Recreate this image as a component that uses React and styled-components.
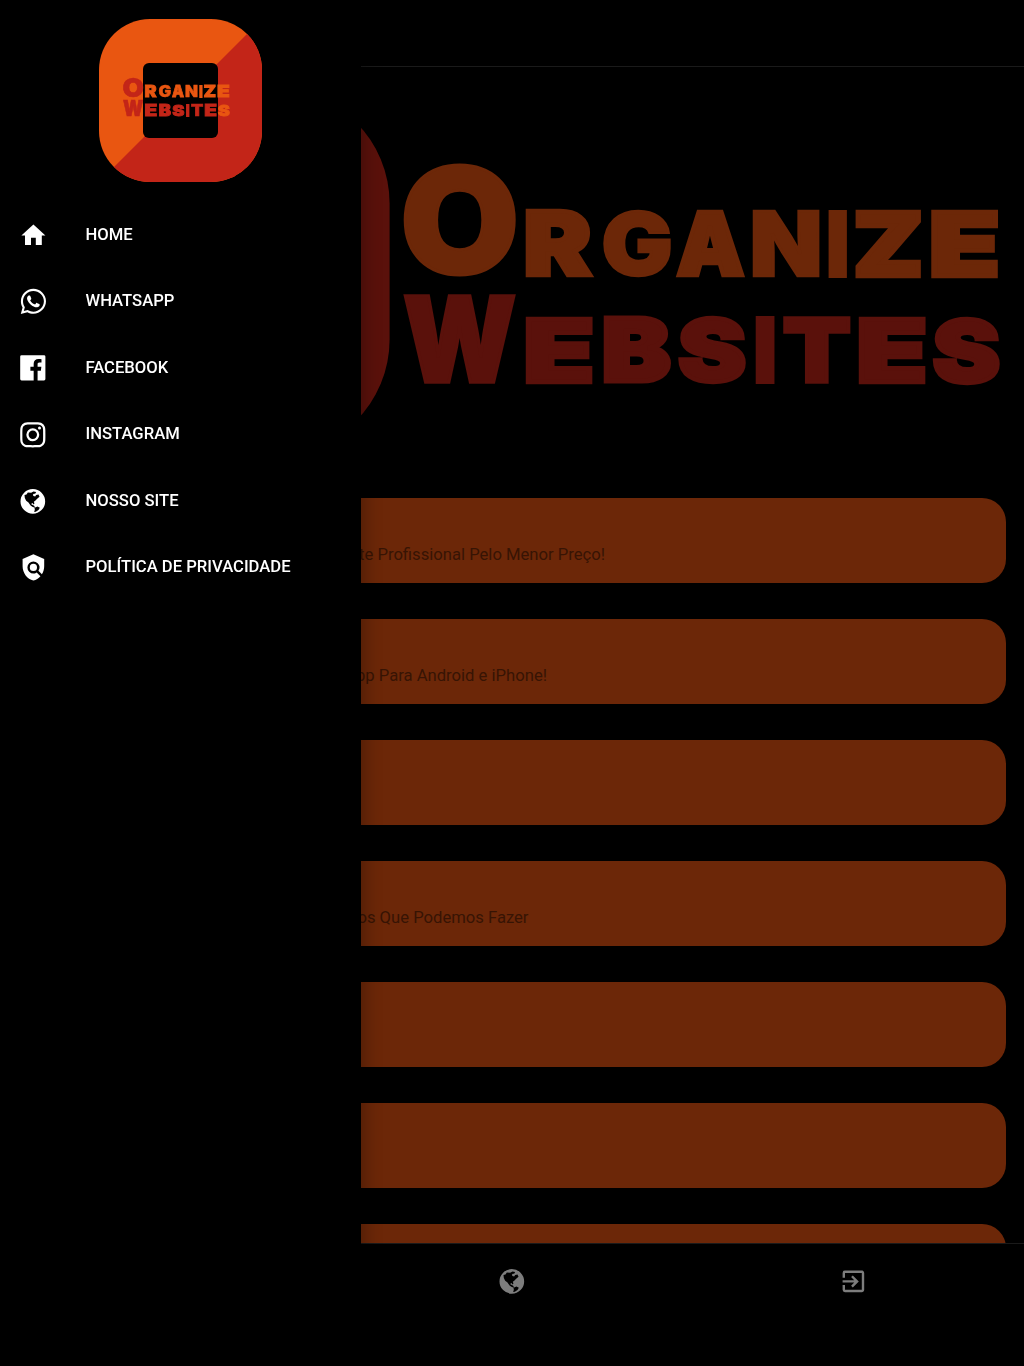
import React from "react";
import styled, { createGlobalStyle } from "styled-components";
import { MdHome, MdPolicy, MdExitToApp } from "react-icons/md";
import { FaWhatsapp } from "react-icons/fa";
import { BiLogoInstagram, BiLogoFacebookSquare } from "react-icons/bi";

const GlobalStyle = createGlobalStyle`
  html, body { margin: 0; background: #000; overflow: hidden; }
  body { font-family: Roboto, "Noto Sans", sans-serif; font-size: 16.64px; }
  * { box-sizing: border-box; }
`;

const Screen = styled.div`
  display: flex;
  flex-direction: column;
  height: 1366px;
  width: 1024px;
  background: #000;
`;

const Header = styled.header`
  flex: none;
  height: 67px;
  border-bottom: 1px solid #1a1a1a;
`;

const Content = styled.main`
  flex: 1;
  min-height: 0;
  overflow: hidden;
`;

const Banner = styled.svg`
  display: block;
  width: 1024px;
  height: 431px;
`;

const CardList = styled.div`
  display: flex;
  flex-direction: column;
  gap: 35.8px;
  padding: 0 18px;
`;

const Card = styled.article`
  flex: none;
  height: 85.2px;
  padding: 47px ${(p) => p.$inset || 0}px 0 0;
  border-radius: 24px;
  background: #6c2708;
  color: #371404;
  line-height: 20px;
  text-align: right;
  white-space: nowrap;
`;

const Footer = styled.footer`
  flex: none;
  display: grid;
  grid-template-columns: repeat(3, 1fr);
  justify-items: center;
  height: 123px;
  padding-top: 23px;
  border-top: 1px solid #1a1a1a;
  color: #7d7d7d;
  font-size: 28.8px;

  svg { display: block; }
`;

const Drawer = styled.aside`
  position: fixed;
  top: 0;
  left: 0;
  width: 361px;
  height: 1366px;
  padding-top: 19px;
  background: #000;
  box-shadow: 4px 0 16px rgba(0, 0, 0, 0.26);
`;

const AppIcon = styled.svg`
  display: block;
  width: 163px;
  height: 163px;
  margin: 0 auto;
`;

const Menu = styled.nav`
  display: flex;
  flex-direction: column;
  padding-top: 19px;
`;

const MenuItem = styled.a`
  display: flex;
  align-items: center;
  gap: 35px;
  height: 66.5px;
  padding-left: 16px;
  color: #fff;
  font-weight: 500;
`;

const MenuIcon = styled.span`
  display: flex;
  justify-content: center;
  width: 34.5px;
  padding-top: 1.6px;
  font-size: ${(p) => p.$size || 28.8}px;

  svg { flex: none; }
`;

/* Ink bounds of each letter at 100px: left, right, top, bottom, stroke. */
const INK = {
  O: [3, 75, 74, -1, 2], R: [4, 65, 73, 0, 5], G: [3, 72, 74, -1, 3], A: [1.5, 78, 73, 0, 5],
  N: [4, 73, 73, 0, 3], I: [4, 25, 73, 0, 0.01], Z: [3.5, 65.5, 73, 0, 5], E: [4, 57.5, 73, 0, 5],
  W: [1.5, 106.5, 73, 0, 3], B: [4, 64.5, 73, 0, 6], S: [2.5, 64, 74, -1, 5], T: [2.5, 66.5, 73, 0, 4],
};

/* Wordmark boxes: letter, x, width, top, height. */
const FIRST = [
  ["O", 403, 114, 163, 113.5], ["R", 525, 67, 209, 68.5], ["G", 603, 68, 209.5, 68],
  ["A", 676, 69, 209.5, 68], ["N", 752, 68, 209.5, 68], ["I", 828, 19.5, 209.5, 68],
  ["Z", 854, 68, 209.5, 68.5], ["E", 930.5, 68, 209.5, 68.5],
];
const SECOND = [
  ["W", 403, 113, 293.5, 90], ["E", 525, 68, 316, 68], ["B", 603, 68, 316, 68],
  ["S", 678, 68, 316, 68], ["I", 755, 20, 316, 68], ["T", 783, 68, 316, 68],
  ["E", 858, 68, 316, 68], ["S", 932.5, 67.5, 316.5, 68],
];

const Letter = styled.text`
  font: 900 100px Inter, "Liberation Sans", sans-serif;
  stroke-width: ${(p) => p.$weight}px;
  stroke-miterlimit: 3;
`;

function Word({ letters, colors }) {
  return letters.map(([char, x, width, top, height], i) => {
    const [left, right, up, down, weight] = INK[char];
    const sx = width / (right - left + weight);
    const sy = height / (up - down + weight);
    const color = colors[i] || colors[0];
    return (
      <g key={i} transform={`translate(${x} ${top}) scale(${sx} ${sy})`}>
        <Letter $weight={weight} x={weight / 2 - left} y={up + weight / 2} fill={color} stroke={color}>
          {char}
        </Letter>
      </g>
    );
  });
}

const ORANGE = "#e95611";
const RED = "#c32518";
const organizeColors = [RED, ORANGE, ORANGE, ORANGE, ORANGE, ORANGE, ORANGE, ORANGE];
const websitesColors = [RED, RED, RED, RED, RED, RED, RED, ORANGE];

function Earth() {
  return (
    <svg width="1em" height="1em" viewBox="-41.5 -43.2 86.4 86.4" fill="currentColor" fillRule="evenodd">
      <path
        d="M0-37A37 37 0 1 1 0 37A37 37 0 1 1 0-37Z
           M-25-19L-19-21L-15-27L-5-26L2-30L10-28L7-23L3-23L0-20L2-16L7-15L10-19L17-21L20-14L13-8L8-3L3 1L5 6L2 9L-1 5L-4 6L-4 9L0 11L4 13L7 19L0 17L-6 13L-10 8L-13 3L-20-2L-24-10Z
           M5 19L14 15L21 19L17 26L9 31L4 32L6 25Z"
      />
    </svg>
  );
}

const menu = [
  { label: "HOME", icon: <MdHome /> },
  { label: "WHATSAPP", icon: <FaWhatsapp /> },
  { label: "FACEBOOK", icon: <BiLogoFacebookSquare />, size: 33.6 },
  { label: "INSTAGRAM", icon: <BiLogoInstagram />, size: 33.6 },
  { label: "NOSSO SITE", icon: <Earth /> },
  { label: "POLÍTICA DE PRIVACIDADE", icon: <MdPolicy /> },
];

const cards = [
  { text: "Site Profissional Pelo Menor Preço!", inset: 401 },
  { text: "App Para Android e iPhone!", inset: 459 },
  {},
  { text: "Serviços Que Podemos Fazer", inset: 477.5 },
  {},
  {},
  {},
];

export default function App() {
  return (
    <>
      <GlobalStyle />
      <Screen>
        <Header />
        <Content>
          <Banner viewBox="0 67 1024 431">
            <rect x="24" y="88.5" width="365.6" height="366" rx="115" fill="#5a110b" />
            <Word letters={FIRST} colors={["#6c2708"]} />
            <Word letters={SECOND} colors={["#5a110b"]} />
          </Banner>
          <CardList>
            {cards.map((card, i) => (
              <Card key={i} $inset={card.inset}>{card.text}</Card>
            ))}
          </CardList>
        </Content>
        <Footer>
          <MdHome />
          <Earth />
          <MdExitToApp />
        </Footer>
      </Screen>
      <Drawer>
        <AppIcon viewBox="99 19 163 163">
          <defs>
            <clipPath id="tile"><rect x="99" y="19" width="163" height="163" rx="51" /></clipPath>
          </defs>
          <g clipPath="url(#tile)">
            <rect x="99" y="19" width="163" height="163" fill={ORANGE} />
            <path d="M262 19V182H99Z" fill={RED} />
          </g>
          <rect x="143" y="63" width="75" height="75" rx="6" />
          <g transform="translate(123 77) scale(.179) translate(-403 -163)">
            <Word letters={FIRST} colors={organizeColors} />
            <Word letters={SECOND} colors={websitesColors} />
          </g>
        </AppIcon>
        <Menu>
          {menu.map((item) => (
            <MenuItem key={item.label}>
              <MenuIcon $size={item.size}>{item.icon}</MenuIcon>
              {item.label}
            </MenuItem>
          ))}
        </Menu>
      </Drawer>
    </>
  );
}
